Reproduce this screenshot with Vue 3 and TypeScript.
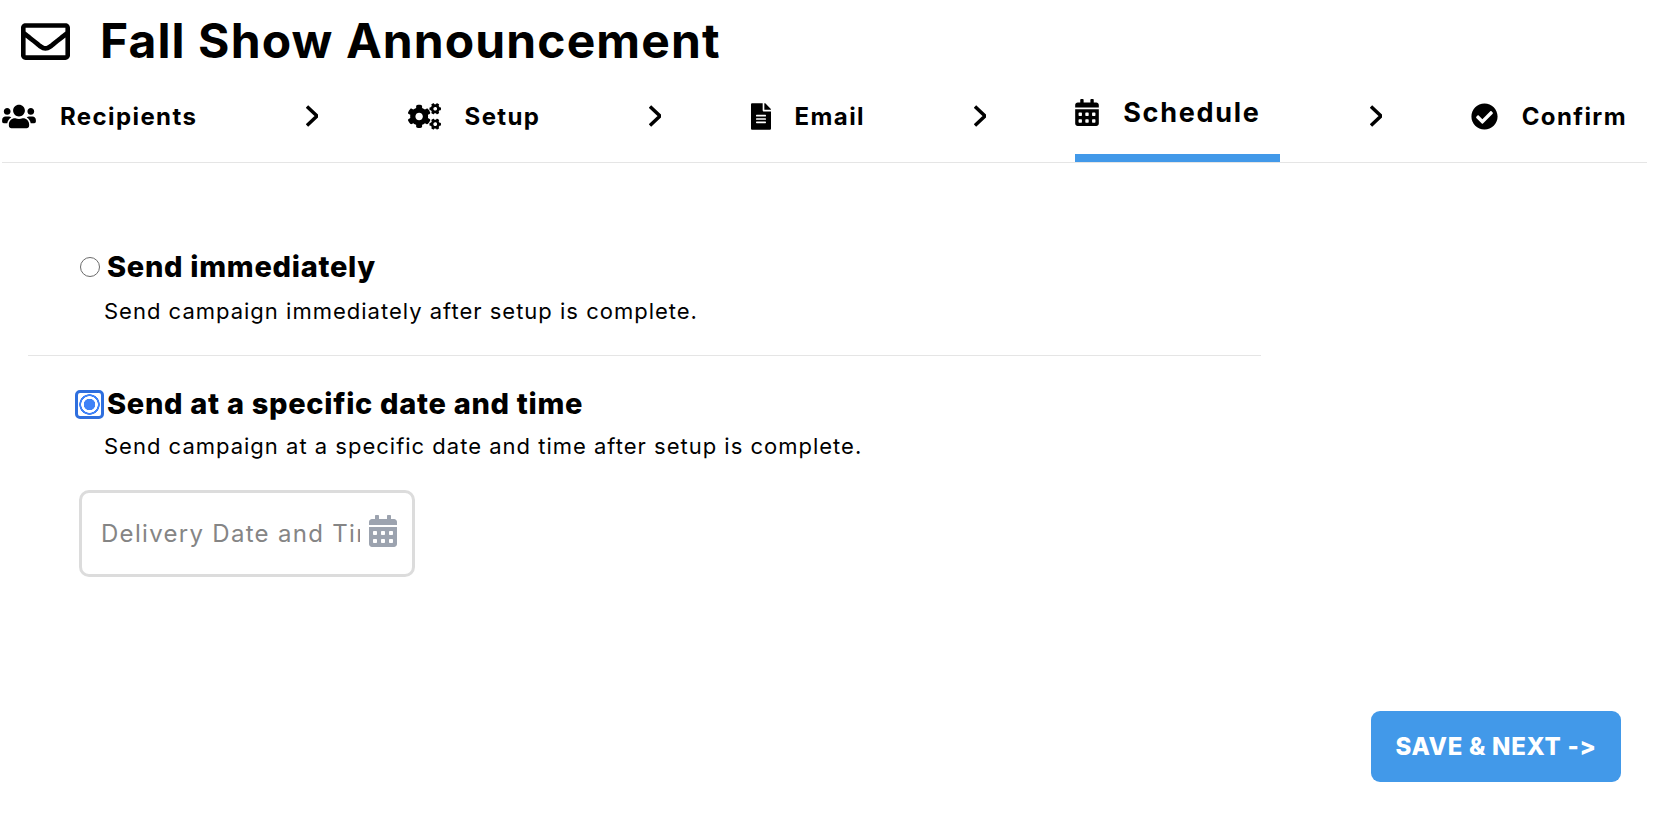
<template>
  <div class="page">
    <header class="title-row">
      <svg class="mail" viewBox="0 0 512 512"><path :d="icons.envelope" /></svg>
      <h1>Fall Show Announcement</h1>
    </header>

    <nav class="tabs">
      <template v-for="(tab, index) in tabs" :key="tab.label">
        <div class="tab" :class="{ active: tab.active }">
          <span class="tab-icon"><svg :viewBox="tab.box" :style="{ width: tab.width + 'px' }"><path :d="tab.path" /></svg></span>
          <span class="tab-label">{{ tab.label }}</span>
        </div>
        <svg v-if="index < tabs.length - 1" class="chevron" viewBox="0 0 12 24"><path d="M1 2.5 11 12 1 21.5" /></svg>
      </template>
    </nav>

    <section class="options">
      <div class="option first">
        <label class="option-head">
          <input type="radio" name="when" class="radio" />
          <span>Send immediately</span>
        </label>
        <p>Send campaign immediately after setup is complete.</p>
      </div>
      <div class="option second">
        <label class="option-head">
          <input type="radio" name="when" class="radio focused" checked />
          <span>Send at a specific date and time</span>
        </label>
        <p>Send campaign at a specific date and time after setup is complete.</p>
        <div class="date-field">
          <input type="text" placeholder="Delivery Date and Time" />
          <svg viewBox="0 0 448 512"><path :d="icons.calendar" /></svg>
        </div>
      </div>
    </section>

    <footer class="actions">
      <button type="button">SAVE &amp; NEXT -&gt;</button>
    </footer>
  </div>
</template>

<script setup lang="ts">
interface Tab {
  label: string;
  box: string;
  width: number;
  path: string;
  active?: boolean;
}

const icons = {
  envelope: 'M464 64H48C21.49 64 0 85.49 0 112v288c0 26.51 21.49 48 48 48h416c26.51 0 48-21.49 48-48V112c0-26.51-21.49-48-48-48zm0 48v40.805c-22.422 18.259-58.168 46.651-134.587 106.49-16.841 13.247-50.201 45.072-73.413 44.701-23.208.375-56.579-31.459-73.413-44.701C106.18 199.465 70.425 171.067 48 152.805V112h416zM48 400V214.398c22.914 18.251 55.409 43.862 104.938 82.646 21.857 17.205 60.134 55.186 103.062 54.955 42.717.231 80.509-37.199 103.053-54.947 49.528-38.783 82.032-64.401 104.947-82.653V400H48z',
  users: 'M96 224c35.3 0 64-28.7 64-64s-28.7-64-64-64-64 28.7-64 64 28.7 64 64 64zm448 0c35.3 0 64-28.7 64-64s-28.7-64-64-64-64 28.7-64 64 28.7 64 64 64zm32 32h-64c-17.6 0-33.5 7.1-45.1 18.6 40.3 22.1 68.9 62 75.1 109.4h66c17.7 0 32-14.3 32-32v-32c0-35.3-28.7-64-64-64zm-256 0c61.9 0 112-50.1 112-112S381.9 32 320 32 208 82.1 208 144s50.1 112 112 112zm76.8 32h-8.3c-20.8 10-43.9 16-68.5 16s-47.6-6-68.5-16h-8.3C179.6 288 128 339.6 128 403.2V432c0 26.5 21.5 48 48 48h288c26.5 0 48-21.5 48-48v-28.8c0-63.6-51.6-115.2-115.2-115.2zm-223.7-13.4C161.5 263.1 145.6 256 128 256H64c-35.3 0-64 28.7-64 64v32c0 17.7 14.3 32 32 32h65.9c6.3-47.4 34.9-87.3 75.2-109.4z',
  cogs: 'M512.1 191l-8.2 14.3c-3 5.3-9.4 7.5-15.1 5.4-11.8-4.4-22.6-10.7-32.1-18.6-4.6-3.8-5.8-10.5-2.8-15.7l8.2-14.3c-6.9-8-12.3-17.3-15.9-27.4h-16.5c-6 0-11.2-4.3-12.2-10.3-2-12-2.1-24.6 0-37.1 1-6 6.2-10.4 12.2-10.4h16.5c3.6-10.1 9-19.4 15.9-27.4l-8.2-14.3c-3-5.2-1.9-11.9 2.8-15.7 9.5-7.9 20.4-14.2 32.1-18.6 5.7-2.1 12.1.1 15.1 5.4l8.2 14.3c10.5-1.9 21.2-1.9 31.7 0L552 6.3c3-5.3 9.4-7.5 15.1-5.4 11.8 4.4 22.6 10.7 32.1 18.6 4.6 3.8 5.8 10.5 2.8 15.7l-8.2 14.3c6.9 8 12.3 17.3 15.9 27.4h16.5c6 0 11.2 4.3 12.2 10.3 2 12 2.1 24.6 0 37.1-1 6-6.2 10.4-12.2 10.4h-16.5c-3.6 10.1-9 19.4-15.9 27.4l8.2 14.3c3 5.2 1.9 11.9-2.8 15.7-9.5 7.9-20.4 14.2-32.1 18.6-5.7 2.1-12.1-.1-15.1-5.4l-8.2-14.3c-10.4 1.9-21.2 1.9-31.7 0zm-10.5-58.8c38.5 29.6 82.4-14.3 52.8-52.8-38.5-29.7-82.4 14.3-52.8 52.8zM386.3 286.1l33.7 16.8c10.1 5.8 14.5 18.1 10.5 29.1-8.9 24.2-26.4 46.4-42.6 65.8-7.4 8.9-20.2 11.1-30.3 5.3l-29.1-16.8c-16 13.7-34.6 24.6-54.9 31.7v33.6c0 11.6-8.3 21.6-19.7 23.6-24.6 4.2-50.4 4.4-75.9 0-11.5-2-20-11.9-20-23.6V418c-20.3-7.2-38.9-18-54.9-31.7L74 403c-10 5.8-22.9 3.6-30.3-5.3-16.2-19.4-33.3-41.6-42.2-65.7-4-10.9.4-23.2 10.5-29.1l33.3-16.8c-3.9-20.9-3.9-42.4 0-63.4L12 205.8c-10.1-5.8-14.6-18.1-10.5-29 8.9-24.2 26-46.4 42.2-65.8 7.4-8.9 20.2-11.1 30.3-5.3l29.1 16.8c16-13.7 34.6-24.6 54.9-31.7V57.1c0-11.5 8.2-21.5 19.6-23.5 24.6-4.2 50.5-4.4 76-.1 11.5 2 20 11.9 20 23.6v33.6c20.3 7.2 38.9 18 54.9 31.7l29.1-16.8c10-5.8 22.9-3.6 30.3 5.3 16.2 19.4 33.2 41.6 42.1 65.8 4 10.9.1 23.2-10 29.1l-33.7 16.8c3.9 21 3.9 42.5 0 63.5zm-117.6 21.1c59.2-77-28.7-164.9-105.7-105.7-59.2 77 28.7 164.9 105.7 105.7zm243.4 182.7l-8.2 14.3c-3 5.3-9.4 7.5-15.1 5.4-11.8-4.4-22.6-10.7-32.1-18.6-4.6-3.8-5.8-10.5-2.8-15.7l8.2-14.3c-6.9-8-12.3-17.3-15.9-27.4h-16.5c-6 0-11.2-4.3-12.2-10.3-2-12-2.1-24.6 0-37.1 1-6 6.2-10.4 12.2-10.4h16.5c3.6-10.1 9-19.4 15.9-27.4l-8.2-14.3c-3-5.2-1.9-11.9 2.8-15.7 9.5-7.9 20.4-14.2 32.1-18.6 5.7-2.1 12.1.1 15.1 5.4l8.2 14.3c10.5-1.9 21.2-1.9 31.7 0l8.2-14.3c3-5.3 9.4-7.5 15.1-5.4 11.8 4.4 22.6 10.7 32.1 18.6 4.6 3.8 5.8 10.5 2.8 15.7l-8.2 14.3c6.9 8 12.3 17.3 15.9 27.4h16.5c6 0 11.2 4.3 12.2 10.3 2 12 2.1 24.6 0 37.1-1 6-6.2 10.4-12.2 10.4h-16.5c-3.6 10.1-9 19.4-15.9 27.4l8.2 14.3c3 5.2 1.9 11.9-2.8 15.7-9.5 7.9-20.4 14.2-32.1 18.6-5.7 2.1-12.1-.1-15.1-5.4l-8.2-14.3c-10.4 1.9-21.2 1.9-31.7 0zM501.6 431c38.5 29.6 82.4-14.3 52.8-52.8-38.5-29.6-82.4 14.3-52.8 52.8z',
  file: 'M224 136V0H24C10.7 0 0 10.7 0 24v464c0 13.3 10.7 24 24 24h336c13.3 0 24-10.7 24-24V160H248c-13.2 0-24-10.8-24-24zm64 236c0 6.6-5.4 12-12 12H108c-6.6 0-12-5.4-12-12v-8c0-6.6 5.4-12 12-12h168c6.6 0 12 5.4 12 12v8zm0-64c0 6.6-5.4 12-12 12H108c-6.6 0-12-5.4-12-12v-8c0-6.6 5.4-12 12-12h168c6.6 0 12 5.4 12 12v8zm0-72v8c0 6.6-5.4 12-12 12H108c-6.6 0-12-5.4-12-12v-8c0-6.6 5.4-12 12-12h168c6.6 0 12 5.4 12 12zm96-114.1v6.1H256V0h6.1c6.4 0 12.5 2.5 17 7l97.9 98c4.5 4.5 7 10.6 7 16.9z',
  calendar: 'M0 464c0 26.5 21.5 48 48 48h352c26.5 0 48-21.5 48-48V192H0v272zm320-196c0-6.6 5.4-12 12-12h40c6.6 0 12 5.4 12 12v40c0 6.6-5.4 12-12 12h-40c-6.6 0-12-5.4-12-12v-40zm0 128c0-6.6 5.4-12 12-12h40c6.6 0 12 5.4 12 12v40c0 6.6-5.4 12-12 12h-40c-6.6 0-12-5.4-12-12v-40zM192 268c0-6.6 5.4-12 12-12h40c6.6 0 12 5.4 12 12v40c0 6.6-5.4 12-12 12h-40c-6.6 0-12-5.4-12-12v-40zm0 128c0-6.6 5.4-12 12-12h40c6.6 0 12 5.4 12 12v40c0 6.6-5.4 12-12 12h-40c-6.6 0-12-5.4-12-12v-40zM64 268c0-6.6 5.4-12 12-12h40c6.6 0 12 5.4 12 12v40c0 6.6-5.4 12-12 12H76c-6.6 0-12-5.4-12-12v-40zm0 128c0-6.6 5.4-12 12-12h40c6.6 0 12 5.4 12 12v40c0 6.6-5.4 12-12 12H76c-6.6 0-12-5.4-12-12v-40zM400 64h-48V16c0-8.8-7.2-16-16-16h-32c-8.8 0-16 7.2-16 16v48H160V16c0-8.8-7.2-16-16-16h-32c-8.8 0-16 7.2-16 16v48H48C21.5 64 0 85.5 0 112v48h448v-48c0-26.5-21.5-48-48-48z',
  check: 'M504 256c0 136.967-111.033 248-248 248S8 392.967 8 256 119.033 8 256 8s248 111.033 248 248zM227.314 387.314l184-184c6.248-6.248 6.248-16.379 0-22.627l-22.627-22.627c-6.248-6.249-16.379-6.249-22.628 0L216 308.118l-70.059-70.059c-6.248-6.248-16.379-6.248-22.628 0l-22.627 22.627c-6.248 6.248-6.248 16.379 0 22.627l104 104c6.249 6.249 16.379 6.249 22.628.001z'
};

const tabs: Tab[] = [
  { label: 'Recipients', box: '0 0 640 512', width: 34, path: icons.users },
  { label: 'Setup', box: '0 0 640 512', width: 33, path: icons.cogs },
  { label: 'Email', box: '0 0 384 512', width: 20, path: icons.file },
  { label: 'Schedule', box: '0 0 448 512', width: 24, path: icons.calendar, active: true },
  { label: 'Confirm', box: '0 0 512 512', width: 27, path: icons.check }
];
</script>

<style scoped>
.page {
  height: 816px;
  box-sizing: border-box;
  padding: 0 27px 0 2px;
  display: flex;
  flex-direction: column;
  font-family: Inter, "Liberation Sans", sans-serif;
  font-variant-ligatures: none;
  font-feature-settings: "calt" 0;
  color: #000;
  background: #fff;
}

.title-row {
  height: 82px;
  display: flex;
  align-items: center;
  gap: 30px;
  padding-left: 19px;
}

.mail {
  width: 49px;
  height: 49px;
  fill: #000;
  flex: none;
}

h1 {
  margin: 0;
  font-size: 48px;
  line-height: 1;
  font-weight: 700;
  letter-spacing: 1.1px;
}

.tabs {
  height: 80px;
  display: flex;
  justify-content: space-between;
  align-items: center;
  border-bottom: 1px solid #e5e5e5;
}

.tab {
  height: 100%;
  box-sizing: border-box;
  display: flex;
  align-items: center;
  padding-right: 20px;
  padding-bottom: 12px;
}

.tab.active {
  border-bottom: 8px solid #4299e9;
  padding-bottom: 12px;
}

.tab-icon {
  display: flex;
  margin-right: 24px;
}

.tab-icon svg {
  fill: #000;
  height: 27px;
}

.tab-label {
  font-size: 24px;
  font-weight: 700;
  letter-spacing: 1.4px;
}

.active .tab-label {
  font-size: 27px;
  letter-spacing: 1.7px;
}

.chevron {
  width: 12px;
  height: 24px;
  margin-bottom: 12px;
  fill: none;
  stroke: #000;
  stroke-width: 3.4;
}

.options {
  width: 1233px;
  margin: 0 0 0 26px;
}

.option {
  padding-left: 52px;
}

.option.first {
  padding-top: 86px;
  padding-bottom: 28px;
  border-bottom: 1px solid #e5e5e5;
}

.option.second {
  padding-top: 30px;
}

.option-head {
  display: flex;
  align-items: center;
  gap: 7px;
  font-size: 29px;
  line-height: 36px;
  font-weight: 800;
  letter-spacing: 0.7px;
}

.option p {
  margin: 10px 0 0 24px;
  font-size: 22px;
  line-height: 32px;
  letter-spacing: 1px;
}

.option.second p {
  margin-top: 8px;
}

.radio {
  appearance: none;
  margin: 0;
  width: 20px;
  height: 20px;
  border: 1.5px solid #6b6b6b;
  border-radius: 50%;
  background: #fff;
  flex: none;
  box-sizing: border-box;
}

.radio.focused {
  margin: 0 -4px 0 -5px;
  width: 29px;
  height: 29px;
  border: 3px solid #2f6fde;
  border-radius: 5px;
  background: radial-gradient(circle, #3f82f7 0 5.5px, #fff 6px 8px, #3f82f7 8.5px 10px, #fff 10.5px);
}

.date-field {
  position: relative;
  width: 336px;
  margin: 28px 0 0 -1px;
}

.date-field input {
  width: 100%;
  height: 87px;
  box-sizing: border-box;
  border: 3px solid #dcdcdc;
  border-radius: 10px;
  padding: 0 52px 0 19px;
  font-family: inherit;
  font-size: 24px;
  letter-spacing: 1.3px;
  outline: none;
}

.date-field input::placeholder {
  color: #858585;
  opacity: 1;
}

.date-field svg {
  position: absolute;
  right: 18px;
  top: 25px;
  width: 28px;
  height: 32px;
  fill: #9ca3af;
}

.actions {
  margin-top: auto;
  padding: 0 26px 34px 0;
  display: flex;
  justify-content: flex-end;
}

button {
  width: 250px;
  height: 71px;
  border: none;
  border-radius: 9px;
  background: #4299e9;
  color: #fff;
  font-family: inherit;
  font-feature-settings: "calt" 0;
  font-size: 24px;
  font-weight: 800;
  letter-spacing: 0.7px;
}
</style>

<style>
html,
body {
  margin: 0;
  background: #fff;
}
</style>
